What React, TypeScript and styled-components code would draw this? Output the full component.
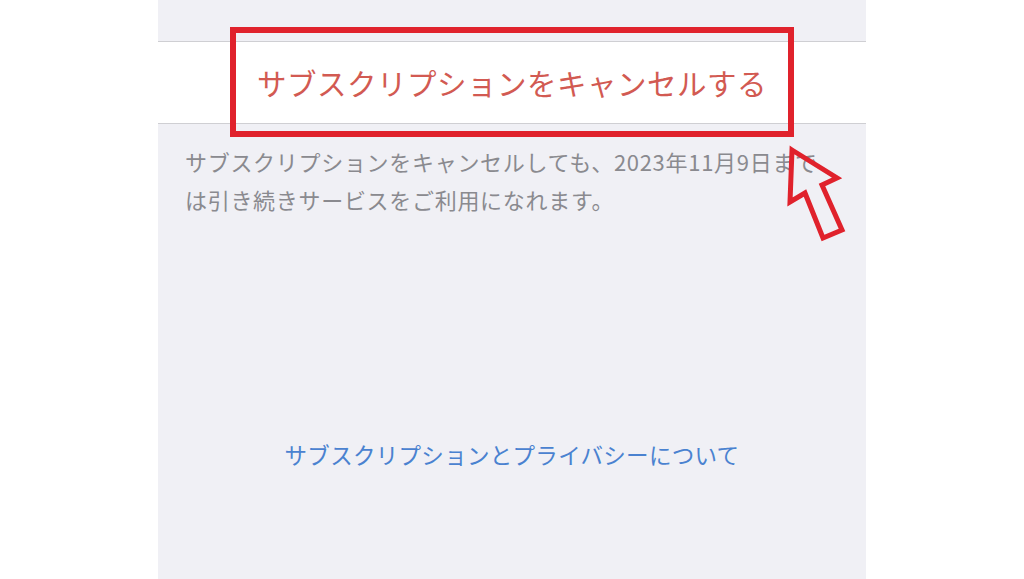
import styled, { createGlobalStyle } from 'styled-components'
import React from 'react'

const GlobalStyle = createGlobalStyle`
  html, body {
    margin: 0;
    padding: 0;
    background: #ffffff;
  }
  body {
    font-family: "Noto Sans CJK JP", "Noto Sans", sans-serif;
  }
`

const Page = styled.div`
  display: flex;
  justify-content: center;
  width: 1024px;
  height: 579px;
  overflow: hidden;
`

const Sheet = styled.div`
  position: relative;
  width: 708px;
  height: 579px;
  background: #f0f0f5;
  display: flex;
  flex-direction: column;
`

const TopGap = styled.div`
  height: 41px;
`

const ActionRow = styled.div`
  height: 81px;
  background: #ffffff;
  border-top: 1px solid #cfcfd3;
  border-bottom: 1px solid #cfcfd3;
  display: flex;
  align-items: center;
  justify-content: center;
`

const CancelLabel = styled.span`
  color: #d25a52;
  font-size: 29.5px;
  letter-spacing: 0.5px;
  line-height: 1;
`

const Footnote = styled.p`
  margin: 0;
  padding: 18px 36px 0 27px;
  color: #8a8a8f;
  font-size: 22px;
  line-height: 38px;
  letter-spacing: 0.7px;
`

const LinkRow = styled.div`
  margin-top: 221px;
  display: flex;
  justify-content: center;
`

const PolicyLink = styled.a`
  color: #4a82d0;
  font-size: 22.5px;
  line-height: 30px;
  letter-spacing: 0.3px;
  text-decoration: none;
`

const Highlight = styled.div`
  position: absolute;
  left: 72px;
  top: 27px;
  width: 552px;
  height: 98px;
  border: 6px solid #e0222c;
  pointer-events: none;
`

const Pointer = styled.svg`
  position: absolute;
  left: 620px;
  top: 140px;
  width: 80px;
  height: 110px;
  overflow: visible;
  pointer-events: none;
`

// outlined arrow pointing up-left at the highlighted button
const ArrowMark = () => (
  <Pointer viewBox="0 0 80 110">
    <polygon
      points="14,10 59,38 44,45 64,90 45,98 27,53 12,62"
      fill="none"
      stroke="#e0222c"
      strokeWidth="5"
      strokeLinejoin="miter"
    />
  </Pointer>
)

const App = () => {
  return (
    <Page>
      <GlobalStyle />
      <Sheet>
        <TopGap />
        <ActionRow>
          <CancelLabel>サブスクリプションをキャンセルする</CancelLabel>
        </ActionRow>
        <Footnote>
          サブスクリプションをキャンセルしても、2023年11月9日までは引き続きサービスをご利用になれます。
        </Footnote>
        <LinkRow>
          <PolicyLink>サブスクリプションとプライバシーについて</PolicyLink>
        </LinkRow>
        <Highlight />
        <ArrowMark />
      </Sheet>
    </Page>
  )
}

export default App
